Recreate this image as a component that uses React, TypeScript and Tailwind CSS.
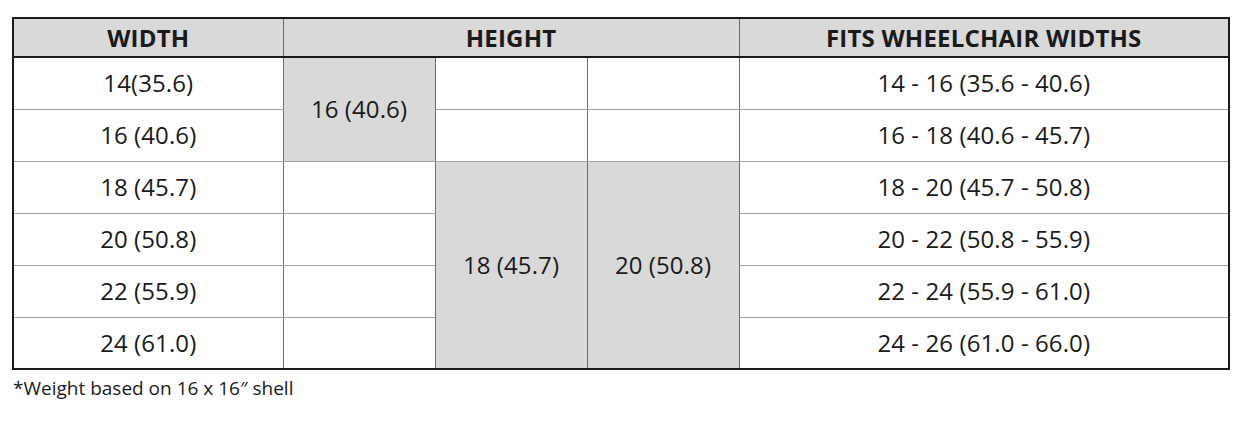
const font = { fontFamily: '"Open Sans", "Noto Sans", sans-serif' }

const widths = ['14(35.6)', '16 (40.6)', '18 (45.7)', '20 (50.8)', '22 (55.9)', '24 (61.0)']
const fits = [
  '14 - 16 (35.6 - 40.6)',
  '16 - 18 (40.6 - 45.7)',
  '18 - 20 (45.7 - 50.8)',
  '20 - 22 (50.8 - 55.9)',
  '22 - 24 (55.9 - 61.0)',
  '24 - 26 (61.0 - 66.0)',
]

const cell = 'h-[52px] p-0 text-center align-middle border-y border-y-[#a3a3a3] border-x border-x-[#6f6f6f]'
const head = 'h-[39px] p-0 font-bold text-[24px] tracking-[0.2px] border-x border-x-[#6f6f6f] border-b-2 border-b-[#1a1a1a]'
const shaded = 'bg-[#d9d9d9]'

export default function App() {
  return (
    <div className="w-[1242px] h-[434px] bg-white pt-[17px] pl-[12px] text-[#1a1a1a]" style={font}>
      <table className="w-[1218px] table-fixed border-collapse border-2 border-[#1a1a1a] text-[24px] tracking-[0.1px]">
        <colgroup>
          <col className="w-[270px]" />
          <col className="w-[152px]" />
          <col className="w-[152px]" />
          <col className="w-[152px]" />
          <col />
        </colgroup>
        <thead>
          <tr className="bg-[#d9d9d9]">
            <th className={head}>WIDTH</th>
            <th colSpan={3} className={head}>HEIGHT</th>
            <th className={head}>FITS WHEELCHAIR WIDTHS</th>
          </tr>
        </thead>
        <tbody>
          {widths.map((w, i) => (
            <tr key={w}>
              <td className={cell}>{w}</td>
              {i === 0 && <td rowSpan={2} className={`${cell} ${shaded}`}>16 (40.6)</td>}
              {i >= 2 && <td className={cell}></td>}
              {i < 2 && <td className={cell}></td>}
              {i < 2 && <td className={cell}></td>}
              {i === 2 && <td rowSpan={4} className={`${cell} ${shaded}`}>18 (45.7)</td>}
              {i === 2 && <td rowSpan={4} className={`${cell} ${shaded}`}>20 (50.8)</td>}
              <td className={cell}>{fits[i]}</td>
            </tr>
          ))}
        </tbody>
      </table>
      <p className="mt-[4px] pl-[1px] text-[19px]">*Weight based on 16 x 16″ shell</p>
    </div>
  )
}
